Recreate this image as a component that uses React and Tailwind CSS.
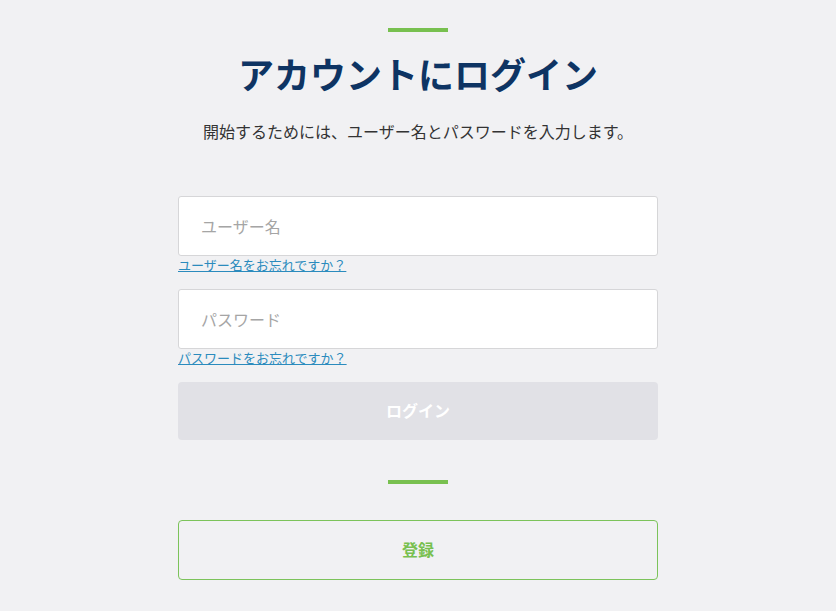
import React, { useState } from "react";

const font = "font-['Noto_Sans_CJK_JP','Noto_Sans',sans-serif]";

const Divider = ({ className = "" }) => (
  <div className={`mx-auto h-[4px] w-[60px] bg-[#78c04f] ${className}`} />
);

const App = () => {
  const [username, setUsername] = useState("");
  const [password, setPassword] = useState("");

  return (
    <div className={`min-h-[611px] w-full bg-[#f1f1f3] ${font}`}>
      <div className="mx-auto flex w-[480px] flex-col pt-[28px]">
        <Divider />

        <h1 className="mt-[17px] text-center text-[36px] font-bold leading-[48px] text-[#0e3463]">
          アカウントにログイン
        </h1>

        <p className="mt-[22px] text-center text-[16px] leading-[24px] text-[#333333]">
          開始するためには、ユーザー名とパスワードを入力します。
        </p>

        <input
          type="text"
          value={username}
          onChange={(e) => setUsername(e.target.value)}
          placeholder="ユーザー名"
          className="mt-[53px] h-[60px] w-full rounded-[3px] border border-[#d6d6d8] bg-white px-[22px] text-[16px] text-[#333] placeholder-[#a5a5a5] outline-none"
        />
        <a href="#" className="self-start text-[13px] leading-[18px] text-[#2b8bbd] underline">
          ユーザー名をお忘れですか？
        </a>

        <input
          type="password"
          value={password}
          onChange={(e) => setPassword(e.target.value)}
          placeholder="パスワード"
          className="mt-[15px] h-[60px] w-full rounded-[3px] border border-[#d6d6d8] bg-white px-[22px] text-[16px] text-[#333] placeholder-[#a5a5a5] outline-none"
        />
        <a href="#" className="self-start text-[13px] leading-[18px] text-[#2b8bbd] underline">
          パスワードをお忘れですか？
        </a>

        <button className="mt-[15px] h-[58px] w-full rounded-[4px] bg-[#e1e1e6] pb-[3px] text-[16px] font-bold text-white">
          ログイン
        </button>

        <Divider className="mt-[40px]" />

        <button className="mt-[36px] h-[60px] w-full rounded-[4px] border border-[#7cc35a] pb-[3px] text-[16px] font-bold text-[#78c04f]">
          登録
        </button>
      </div>
    </div>
  );
};

export default App;
